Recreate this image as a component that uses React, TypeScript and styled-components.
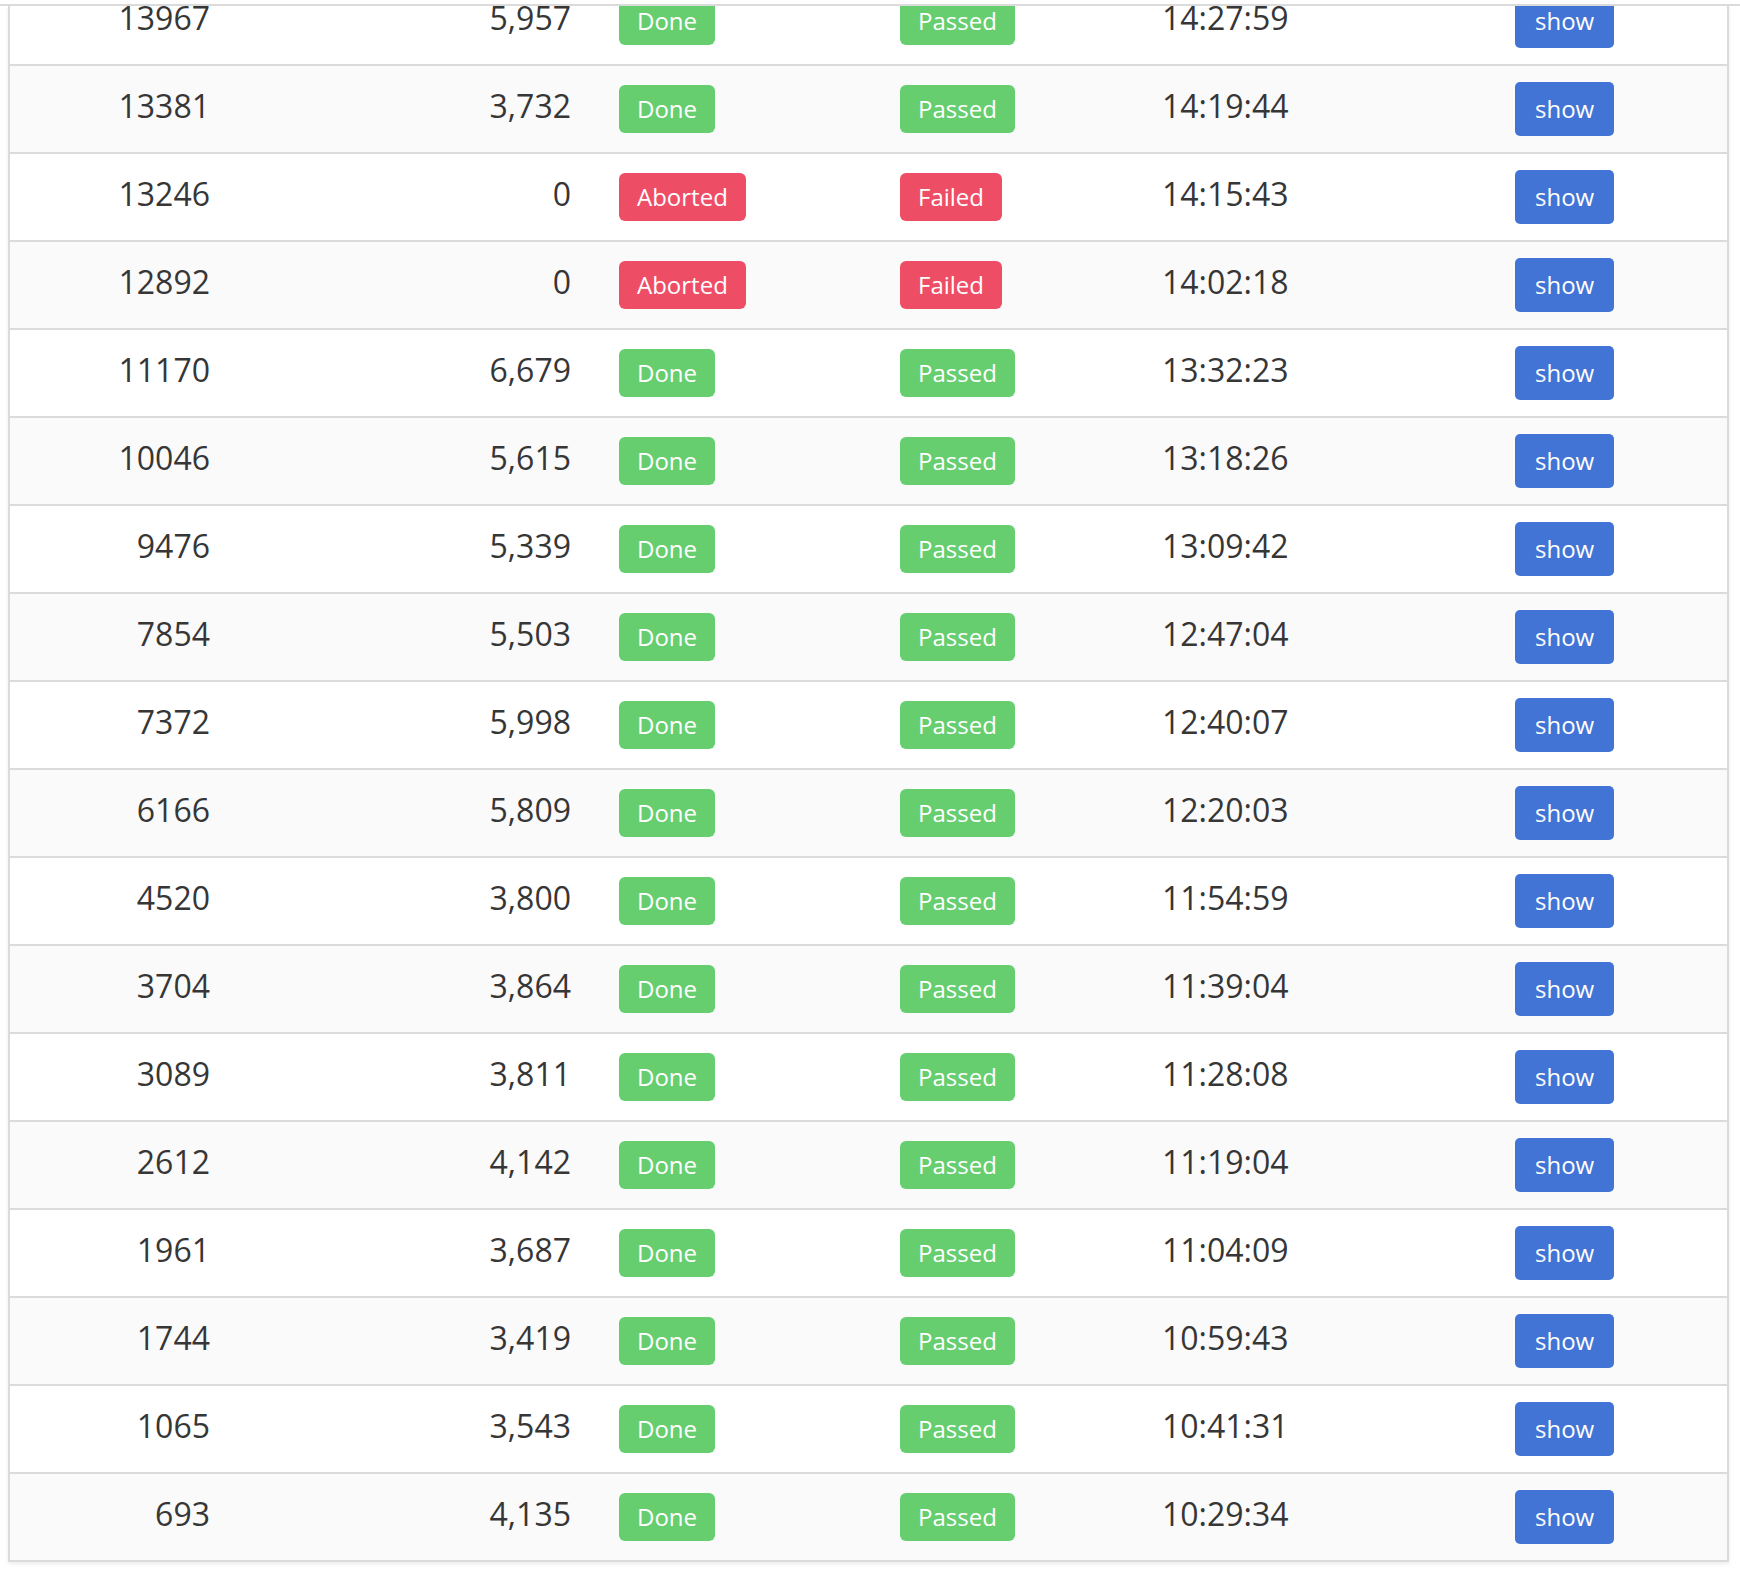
import React from 'react';
import styled, { createGlobalStyle } from 'styled-components';

type Status = 'Done' | 'Aborted';
type Result = 'Passed' | 'Failed';

interface Run {
  id: number;
  count: string;
  status: Status;
  result: Result;
  time: string;
}

const RUNS: Run[] = [
  { id: 13967, count: '5,957', status: 'Done', result: 'Passed', time: '14:27:59' },
  { id: 13381, count: '3,732', status: 'Done', result: 'Passed', time: '14:19:44' },
  { id: 13246, count: '0', status: 'Aborted', result: 'Failed', time: '14:15:43' },
  { id: 12892, count: '0', status: 'Aborted', result: 'Failed', time: '14:02:18' },
  { id: 11170, count: '6,679', status: 'Done', result: 'Passed', time: '13:32:23' },
  { id: 10046, count: '5,615', status: 'Done', result: 'Passed', time: '13:18:26' },
  { id: 9476, count: '5,339', status: 'Done', result: 'Passed', time: '13:09:42' },
  { id: 7854, count: '5,503', status: 'Done', result: 'Passed', time: '12:47:04' },
  { id: 7372, count: '5,998', status: 'Done', result: 'Passed', time: '12:40:07' },
  { id: 6166, count: '5,809', status: 'Done', result: 'Passed', time: '12:20:03' },
  { id: 4520, count: '3,800', status: 'Done', result: 'Passed', time: '11:54:59' },
  { id: 3704, count: '3,864', status: 'Done', result: 'Passed', time: '11:39:04' },
  { id: 3089, count: '3,811', status: 'Done', result: 'Passed', time: '11:28:08' },
  { id: 2612, count: '4,142', status: 'Done', result: 'Passed', time: '11:19:04' },
  { id: 1961, count: '3,687', status: 'Done', result: 'Passed', time: '11:04:09' },
  { id: 1744, count: '3,419', status: 'Done', result: 'Passed', time: '10:59:43' },
  { id: 1065, count: '3,543', status: 'Done', result: 'Passed', time: '10:41:31' },
  { id: 693, count: '4,135', status: 'Done', result: 'Passed', time: '10:29:34' },
];

const COLUMNS = [224, 361, 281, 262, 353, 236];

const GREEN = '#66ce6f';
const RED = '#ee4d66';
const BLUE = '#4274d6';

function App() {
  return (
    <>
      <GlobalStyle />
      <TopBar />
      <Main>
        <Panel>
          <Table>
            <colgroup>
              {COLUMNS.map((w, i) => (
                <Col key={i} $width={w} />
              ))}
            </colgroup>
            <tbody>
              {RUNS.map(run => (
                <Row key={run.id}>
                  <Cell $align="right">{run.id}</Cell>
                  <Cell $align="right">{run.count}</Cell>
                  <Cell $middle>
                    <Tag $color={run.status === 'Done' ? GREEN : RED}>{run.status}</Tag>
                  </Cell>
                  <Cell $middle>
                    <Tag $color={run.result === 'Passed' ? GREEN : RED}>{run.result}</Tag>
                  </Cell>
                  <Cell>{run.time}</Cell>
                  <Cell>
                    <ShowButton href="#">show</ShowButton>
                  </Cell>
                </Row>
              ))}
            </tbody>
          </Table>
        </Panel>
      </Main>
    </>
  );
}

const GlobalStyle = createGlobalStyle`
  html, body {
    margin: 0;
    padding: 0;
    background: #fff;
  }
  body {
    font-family: "Open Sans", "Noto Sans", sans-serif;
    color: #363636;
  }
  * {
    box-sizing: border-box;
  }
`;

const TopBar = styled.header`
  height: 6px;
  border-bottom: 2px solid #dbdbdb;
  background: #fff;
  position: relative;
  z-index: 1;
`;

const Main = styled.main`
  padding: 0 11px 10px 8px;
`;

const Panel = styled.section`
  border: 2px solid #dbdbdb;
  border-top: none;
  box-shadow: 0 2px 4px rgba(10, 10, 10, 0.08);
  overflow: hidden;
  background: #fff;
`;

const Table = styled.table`
  width: 100%;
  table-layout: fixed;
  border-collapse: separate;
  border-spacing: 0;
  margin-top: -28px;
  font-size: 32px;
  line-height: 48px;
`;

const Col = styled.col<{ $width: number }>`
  width: ${p => p.$width}px;
`;

const Row = styled.tr`
  background: #fff;

  &:nth-child(even) {
    background: #fafafa;
  }

  &:last-child td {
    border-bottom: none;
  }
`;

const Cell = styled.td<{ $align?: 'left' | 'right'; $middle?: boolean }>`
  padding: 16px 24px;
  border-bottom: 2px solid #dbdbdb;
  text-align: ${p => p.$align || 'left'};
  vertical-align: ${p => (p.$middle ? 'middle' : 'top')};
  white-space: nowrap;
`;

const Tag = styled.span<{ $color: string }>`
  display: flex;
  align-items: center;
  justify-content: center;
  width: max-content;
  height: 48px;
  padding: 0 18px;
  border-radius: 6px;
  background: ${p => p.$color};
  color: #fff;
  font-size: 24px;
  line-height: 36px;
`;

const ShowButton = styled.a`
  display: flex;
  align-items: center;
  justify-content: center;
  width: max-content;
  height: 54px;
  padding: 0 18px;
  border: 2px solid transparent;
  border-radius: 5px;
  background: ${BLUE};
  color: #fff;
  font-size: 24px;
  line-height: 36px;
  text-decoration: none;
`;

export default App;
